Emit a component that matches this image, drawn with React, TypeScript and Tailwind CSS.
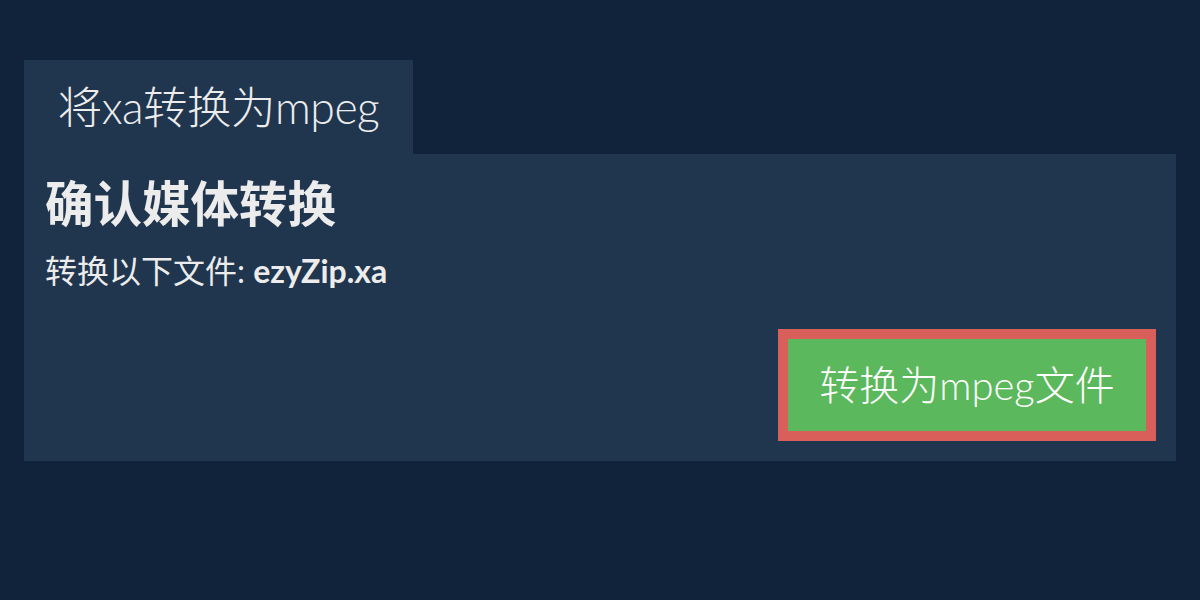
export default function App() {
  const font = { fontFamily: 'Lato, "Noto Sans CJK SC", sans-serif' };

  return (
    <div className="min-h-[600px] w-full bg-[#10233a] pt-[60px] px-[24px] text-[#ececec]" style={font}>
      <div className="w-[389px] h-[94px] bg-[#20354e] flex items-center justify-center">
        <span className="text-[44.5px] font-light leading-none tracking-[-0.5px]">将xa转换为mpeg</span>
      </div>
      <div className="bg-[#20354e] h-[307px] pl-[21px] pr-[20px] pt-[20px] pb-[20px] flex flex-col">
        <h2 className="text-[48.5px] font-bold leading-[58px]">确认媒体转换</h2>
        <p className="text-[32px] leading-[40px] mt-[19px]">
          转换以下文件: <b className="font-bold">ezyZip.xa</b>
        </p>
        <div className="mt-auto flex justify-end">
          <button className="w-[378px] h-[112px] border-[10px] border-[#d95f5b] bg-[#5cb85c] text-white text-[40px] font-light">
            转换为mpeg文件
          </button>
        </div>
      </div>
    </div>
  );
}
